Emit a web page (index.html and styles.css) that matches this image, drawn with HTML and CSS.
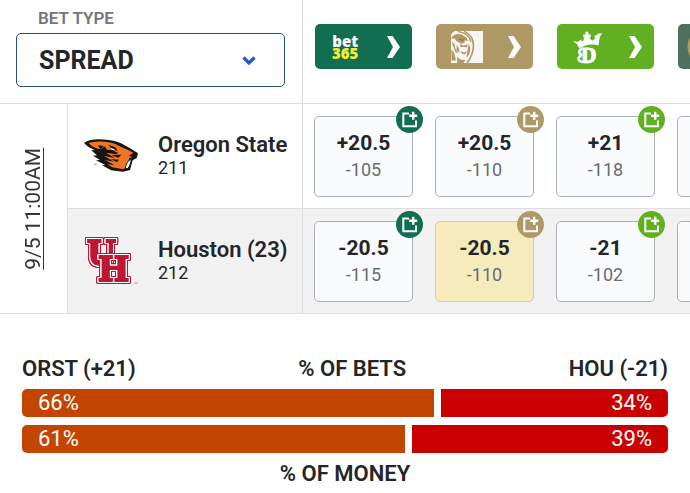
FILE: index.html
```html
<!DOCTYPE html>
<html lang="en">
<head>
    <meta charset="UTF-8">
    <meta name="viewport" content="width=device-width, initial-scale=1.0">
    <title>Spread</title>
    <link rel="stylesheet" href="styles.css">
</head>
<body>
    <!-- shared icons -->
    <svg class="sprite" aria-hidden="true">
        <symbol id="arrow" viewBox="0 0 13 22">
            <path d="M0 0h5.500L13 11 5.500 22H0L6 11z" fill="#fff"/>
        </symbol>
        <symbol id="add" viewBox="0 0 27 27">
            <path d="M13 7.500H7.300V20.300H20V14.500" fill="none" stroke="#fff" stroke-width="2"/>
            <path d="M17.200 5.800v8M13.200 9.800h8" fill="none" stroke="#fff" stroke-width="2.400"/>
        </symbol>
    </svg>

    <div class="odds">
        <table class="odds-table">
            <colgroup>
                <col class="col-date">
                <col class="col-team">
                <col class="col-book" span="4">
            </colgroup>
            <thead>
                <tr>
                    <th class="bet-type" colspan="2">
                        <label for="bet-type">BET TYPE</label>
                        <div class="select-box">
                            <select id="bet-type">
                                <option>SPREAD</option>
                            </select>
                            <svg class="caret" viewBox="0 0 14 10">
                                <path d="M1.500 1.500L7 7l5.500-5.500" fill="none" stroke="#2459c4" stroke-width="3.200"/>
                            </svg>
                        </div>
                    </th>
                    <th class="book">
                        <button class="book-button green" aria-label="bet365">
                            <span class="bet365"><span>bet</span><span class="yellow">365</span></span>
                            <svg class="arrow"><use href="#arrow"/></svg>
                        </button>
                    </th>
                    <th class="book">
                        <button class="book-button gold" aria-label="BetMGM">
                            <svg class="book-logo" viewBox="0 0 97 97">
                                <path d="M0 0H97V97H0z" fill="#f8f6f3"/>
                                <path d="M0 0h10L2 8l-2 3zM3 17l13-8 15 1 15 9 6 12-9-3-3 8-9 3-14-8-7-9-9 3zM26 40l12 4 13-3-3 9-9-2-10 1zM2 34l8 4 3 14 9 18-9-7zM1 55l9 12 5 22-13 1zM17 42l7 11 2 14-9-9zM29 61l10 4 9-3-5 9-10-2zM18 78l12 9 14 1-6 9H19zM54 38l5 16-4 17-8 11 2-19z" fill="#b09a66"/>
                                <g fill="none" stroke="#b09a66" stroke-linecap="round">
                                    <path d="M42 2c15 7 26 22 26 42S61 80 50 95" stroke-width="5"/>
                                    <path d="M22 2c19 2 35 13 38 30" stroke-width="4"/>
                                </g>
                                <path d="M24 24l9 4 6-1" fill="none" stroke="#806b39" stroke-width="3"/>
                            </svg>
                            <svg class="arrow"><use href="#arrow"/></svg>
                        </button>
                    </th>
                    <th class="book">
                        <button class="book-button lime" aria-label="DraftKings">
                            <svg class="book-logo" viewBox="0 0 96 96">
                                <path d="M3 30L17 33 26 26 32 32 37 21 34 19V10L40 11V2H49V11L56 10V19L52 21 61 29 70 22 66 14 75 13 77 8 91 7 83 19 80 43C61 38 39 41 22 52L15 40z" fill="#fff"/>
                                <text class="crown-letter" x="27" y="92">D</text>
                                <path d="M31 54c-13 2-12 17 0 17M29 76c-12-2-13 13-2 16 13 4 30 3 38-5" fill="none" stroke="#fff" stroke-width="7"/>
                            </svg>
                            <svg class="arrow"><use href="#arrow"/></svg>
                        </button>
                    </th>
                    <th class="book">
                        <button class="book-button pine" aria-label="More books">
                            <svg class="book-logo crest" viewBox="0 0 40 40">
                                <circle cx="20" cy="20" r="18" fill="none" stroke="#ad9c68" stroke-width="3"/>
                            </svg>
                        </button>
                    </th>
                </tr>
            </thead>
            <tbody>
                <tr>
                    <td class="date" rowspan="2"><a href="#">9/5 11:00AM</a></td>
                    <th class="team" scope="row">
                        <div class="team-info">
                            <svg class="team-logo" viewBox="0 0 168 168">
                                <path d="M3 45C20 32 48 32 77 36c28 3 45 14 63 24l25 16-4 14-12 7-8 29-21 5-35-4-28-15 10-1-28-14 12-1-21-13 12-1-18-16 12 1C25 61 11 55 3 45z" fill="#171412"/>
                                <path d="M17 45c24-7 60-6 80 3 17 8 30 15 43 20l17 10-5 9-13 3-10 30-9 4-32-6-16-9 22 2-28-15 27 5-30-17 33 6-27-16 34 5-10-12-22-2-5-10-14 9c-13-3-26-8-35-19z" fill="#ee7624"/>
                                <path d="M75 50l22 8 7 11-16-6-13-13zM45 52l18 2-11 10zM106 74l-31-8 19 13zM115 80l-30 1 21 8zM108 95l-26-2 20 9z" fill="#171412"/>
                                <path d="M83 61l9 1 5 5-9-1z" fill="#fff"/>
                                <path d="M145 92c-10 6-15 14-19 31l9-2c6-8 9-17 10-29z" fill="#fff" stroke="#171412" stroke-width="3"/>
                                <path d="M137 83l19-11 6 8-6 10z" fill="#171412"/>
                                <path d="M33 109h8" stroke="#999" stroke-width="3"/>
                            </svg>
                            <div>
                                <div class="team-name">Oregon State</div>
                                <div class="team-number">211</div>
                            </div>
                        </div>
                    </th>
                    <td class="book">
                        <button class="price"><strong>+20.5</strong><span>-105</span><svg class="add green"><use href="#add"/></svg></button>
                    </td>
                    <td class="book">
                        <button class="price"><strong>+20.5</strong><span>-110</span><svg class="add gold"><use href="#add"/></svg></button>
                    </td>
                    <td class="book">
                        <button class="price"><strong>+21</strong><span>-118</span><svg class="add lime"><use href="#add"/></svg></button>
                    </td>
                    <td class="book"><button class="price" aria-label="Odds"></button></td>
                </tr>
                <tr class="shaded">
                    <th class="team" scope="row">
                        <div class="team-info">
                            <svg class="team-logo" viewBox="0 0 56 56">
                                <text class="monogram" x="4" y="32">U</text>
                                <text class="monogram" x="15" y="48">H</text>
                                <path d="M51 50h4" stroke="#c98a94"/>
                            </svg>
                            <div>
                                <div class="team-name">Houston (23)</div>
                                <div class="team-number">212</div>
                            </div>
                        </div>
                    </th>
                    <td class="book">
                        <button class="price"><strong>-20.5</strong><span>-115</span><svg class="add green"><use href="#add"/></svg></button>
                    </td>
                    <td class="book">
                        <button class="price best"><strong>-20.5</strong><span>-110</span><svg class="add gold"><use href="#add"/></svg></button>
                    </td>
                    <td class="book">
                        <button class="price"><strong>-21</strong><span>-102</span><svg class="add lime"><use href="#add"/></svg></button>
                    </td>
                    <td class="book"><button class="price" aria-label="Odds"></button></td>
                </tr>
            </tbody>
        </table>
    </div>

    <div class="splits">
        <div class="split-labels">
            <span>ORST (+21)</span>
            <span>% OF BETS</span>
            <span>HOU (-21)</span>
        </div>
        <div class="split-bar">
            <div class="away" style="flex-grow: 66">66%</div>
            <div class="home" style="flex-grow: 34">34%</div>
        </div>
        <div class="split-bar">
            <div class="away" style="flex-grow: 61">61%</div>
            <div class="home" style="flex-grow: 39">39%</div>
        </div>
        <div class="split-money">% OF MONEY</div>
    </div>
</body>
</html>
```
FILE: styles.css
```css
body {
    margin: 0;
    background-color: #fefefe;
    color: #242529;
    font-family: Roboto, 'Liberation Sans', sans-serif;
    overflow-x: hidden;
}

button {
    font-family: inherit;
    cursor: pointer;
}

.sprite {
    display: none;
}

/* odds table */
.odds {
    overflow: hidden;
}

.odds-table {
    table-layout: fixed;
    width: 787px;
    border-collapse: separate;
    border-spacing: 0;
}

.col-date {
    width: 68px;
}

.col-team {
    width: 235px;
}

.col-book {
    width: 121px;
}

th,
td {
    padding: 0;
    box-sizing: border-box;
    border-bottom: 1px solid #dedee0;
    font-weight: normal;
    text-align: left;
}

.bet-type {
    height: 104px;
    padding: 8px 17px 16px 16px;
    border-right: 1px solid #dedee0;
    vertical-align: top;
}

.bet-type label {
    display: block;
    padding-left: 22px;
    margin-bottom: 5px;
    color: #74757f;
    font-size: 17px;
    font-weight: 600;
    line-height: 20px;
}

.select-box {
    position: relative;
}

select {
    display: block;
    width: 100%;
    height: 54px;
    padding: 0 22px;
    appearance: none;
    background-color: #fefefe;
    border: 1px solid #25507f;
    border-radius: 5px;
    color: #242529;
    font-family: inherit;
    font-size: 25px;
    font-weight: 700;
}

.caret {
    position: absolute;
    top: 23px;
    right: 29px;
    width: 14px;
    height: 10px;
    pointer-events: none;
}

.book {
    padding: 0 11px;
}

.book-button {
    display: flex;
    align-items: center;
    justify-content: space-between;
    width: 97px;
    height: 45px;
    margin: 0 0 10px 1px;
    padding: 0 12px 0 15px;
    border: none;
    border-radius: 5px;
}

.green {
    background-color: #126e51;
}

.gold {
    background-color: #af9966;
}

.lime {
    background-color: #60b022;
}

.pine {
    background-color: #4f705e;
}

.arrow {
    width: 13px;
    height: 22px;
}

.book-logo {
    width: 32px;
    height: 32px;
    overflow: visible;
}

.crest {
    margin-left: -6px;
    width: 40px;
    height: 40px;
}

.bet365 {
    display: flex;
    flex-direction: column;
    padding-left: 2px;
    color: #fff;
    font-family: 'Open Sans', sans-serif;
    font-size: 15px;
    font-weight: 800;
    line-height: 12px;
}

.yellow {
    color: #f3ed37;
}

.date {
    border-right: 1px solid #dedee0;
    text-align: center;
}

.date a {
    display: inline-block;
    writing-mode: vertical-rl;
    transform: rotate(180deg);
    border-left: 1px solid #333438;
    color: #333438;
    font-size: 21px;
    line-height: 20px;
    text-decoration: none;
    vertical-align: middle;
}

tbody tr {
    height: 105px;
}

.shaded .team,
.shaded .book {
    background-color: #f2f2f2;
}

.team {
    padding-left: 15px;
    border-right: 1px solid #dedee0;
}

.team-info {
    display: flex;
    align-items: center;
    gap: 19px;
}

.team-logo {
    flex: none;
    width: 56px;
    height: 56px;
}

.team-name {
    font-size: 22px;
    font-weight: 600;
    line-height: 24px;
    white-space: nowrap;
}

.team-number {
    font-size: 18px;
    line-height: 22px;
}

/* white edge first, then the red keyline round it */
.monogram {
    fill: #bd1736;
    stroke: #bd1736;
    stroke-width: 2;
    font-family: 'DejaVu Serif', serif;
    font-size: 33px;
    font-weight: 700;
    filter: drop-shadow(1px 0 0 #fff) drop-shadow(-1px 0 0 #fff) drop-shadow(0 1px 0 #fff) drop-shadow(0 -1px 0 #fff)
        drop-shadow(1px 0 0 #bd1736) drop-shadow(-1px 0 0 #bd1736) drop-shadow(0 1px 0 #bd1736) drop-shadow(0 -1px 0 #bd1736);
}

.crown-letter {
    fill: #fff;
    stroke: #fff;
    stroke-width: 3;
    font-family: 'Liberation Serif', serif;
    font-size: 64px;
    font-weight: 700;
}

.price {
    position: relative;
    display: flex;
    flex-direction: column;
    align-items: center;
    justify-content: center;
    gap: 4px;
    width: 99px;
    height: 81px;
    padding: 0;
    background-color: #fafbfd;
    border: 1px solid #aab1bc;
    border-radius: 5px;
    color: #242529;
}

.price strong {
    font-size: 21px;
    font-weight: 700;
    line-height: 24px;
}

.price span {
    color: #696c73;
    font-size: 18px;
    line-height: 22px;
}

.price.best {
    background-color: #f5ebbc;
    border-color: #dccf83;
}

.add {
    position: absolute;
    top: -11px;
    right: -11px;
    width: 27px;
    height: 27px;
    border-radius: 50%;
}

/* bets and money */
.splits {
    padding: 42px 22px 0;
    font-size: 22px;
    line-height: 26px;
}

.split-labels {
    display: flex;
    justify-content: space-between;
    margin-bottom: 7px;
    font-weight: 600;
}

.split-bar {
    display: flex;
    gap: 7px;
    margin-bottom: 8px;
    color: #fff;
    line-height: 28px;
}

.away,
.home {
    flex-basis: 0;
    padding: 0 16px;
}

.away {
    background-color: #c34500;
    border-radius: 5px 0 0 5px;
}

.home {
    background-color: #c90000;
    border-radius: 0 5px 5px 0;
    text-align: right;
}

.split-money {
    font-weight: 600;
    text-align: center;
}
```
